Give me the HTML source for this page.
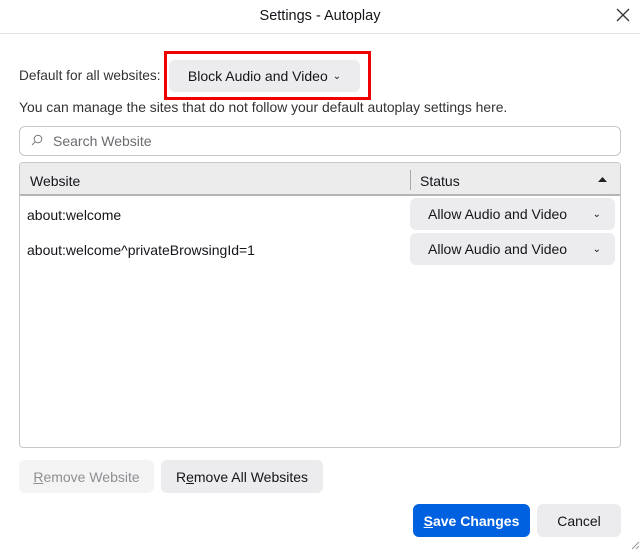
<!DOCTYPE html>
<html><head><style>
*{box-sizing:border-box;margin:0;padding:0}
body{width:640px;height:550px;background:#fff;font-family:"Liberation Sans",sans-serif;font-size:14px;color:#15141a;position:relative;overflow:hidden}
.a{position:absolute}
.btn{position:absolute;background:#ececee;border-radius:6px;display:flex;align-items:center;justify-content:center;font-size:14px;color:#15141a}
</style></head><body>
<div class="a" style="left:0;top:8px;width:640px;text-align:center;font-size:14.5px">Settings - Autoplay</div>
<svg class="a" style="left:616px;top:8px" width="14" height="14"><path d="M1 1L13 13M13 1L1 13" stroke="#333" stroke-width="1.3"/></svg>
<div class="a" style="left:0;top:33px;width:640px;height:1px;background:#e4e4e6"></div>
<div class="a" style="left:19px;top:68px;color:#333;font-size:13.7px">Default for all websites:</div>
<div class="btn" style="left:169px;top:60px;width:191px;height:32px">Block Audio and Video <span style="font-size:10px;margin-left:5px">&#8964;</span></div>
<div class="a" style="left:164px;top:51px;width:207px;height:49px;border:3px solid #e00"></div>
<div class="a" style="left:19px;top:99px;color:#333;font-size:13.9px">You can manage the sites that do not follow your default autoplay settings here.</div>
<div class="a" style="left:19px;top:126px;width:602px;height:30px;border:1px solid #c8c8cc;border-radius:6px"></div>
<svg class="a" style="left:31px;top:134px" width="12" height="12"><circle cx="7" cy="5" r="3.8" fill="none" stroke="#777" stroke-width="1"/><path d="M4.3 7.7L1 11" stroke="#777" stroke-width="1"/></svg>
<div class="a" style="left:53px;top:133px;color:#6b6b70">Search Website</div>
<div class="a" style="left:19px;top:162px;width:602px;height:286px;border:1px solid #c8c8cc;border-radius:4px;overflow:hidden">
 <div class="a" style="left:0;top:0;width:602px;height:33px;background:#ececec;border-bottom:2px solid #b5b5b8"></div>
 <div class="a" style="left:10px;top:10px">Website</div>
 <div class="a" style="left:390px;top:7px;width:1px;height:20px;background:#aaa"></div>
 <div class="a" style="left:400px;top:10px">Status</div>
 <svg class="a" style="left:578px;top:14px" width="9" height="6"><path d="M0 5L4.5 0L9 5Z" fill="#222"/></svg>
 <div class="a" style="left:7px;top:44px">about:welcome</div>
 <div class="a" style="left:7px;top:79px">about:welcome^privateBrowsingId=1</div>
 <div class="btn" style="left:390px;top:35px;width:205px;height:32px;justify-content:flex-start;padding-left:18px">Allow Audio and Video<span style="position:absolute;right:14px;font-size:10px">&#8964;</span></div>
 <div class="btn" style="left:390px;top:70px;width:205px;height:32px;justify-content:flex-start;padding-left:18px">Allow Audio and Video<span style="position:absolute;right:14px;font-size:10px">&#8964;</span></div>
</div>
<div class="btn" style="left:19px;top:460px;width:135px;height:33px;background:#f4f4f5;color:#8f8f93"><u>R</u>emove Website</div>
<div class="btn" style="left:161px;top:460px;width:162px;height:33px">R<u>e</u>move All Websites</div>
<div class="btn" style="left:413px;top:504px;width:117px;height:33px;background:#0061e0;color:#fff;font-weight:bold"><u>S</u>ave Changes</div>
<div class="btn" style="left:537px;top:504px;width:84px;height:33px">Cancel</div>
<svg class="a" style="left:630px;top:540px" width="10" height="10"><path d="M9 2L2 9M9 6L6 9" stroke="#999"/></svg>
</body></html>
